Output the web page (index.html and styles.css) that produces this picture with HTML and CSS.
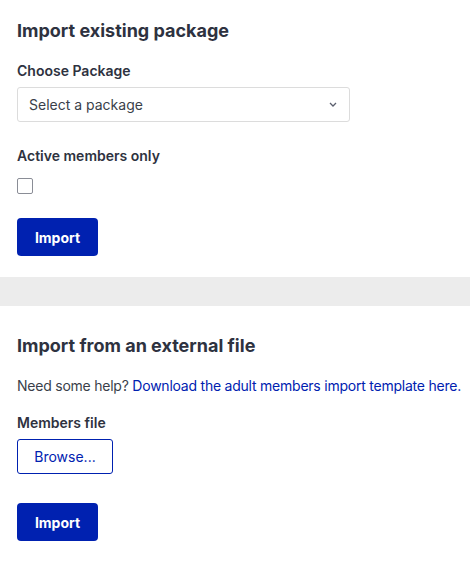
FILE: index.html
```html
<!DOCTYPE html>
<html>
<head>
<meta charset="utf-8">
<link rel="stylesheet" href="styles.css">
</head>
<body>
<section class="panel">
  <h2 class="title">Import existing package</h2>
  <div class="field">
    <label class="label">Choose Package</label>
    <div class="select">
      <span>Select a package</span>
      <svg class="chev" width="8" height="5" viewBox="0 0 8 5"><path d="M1 1l3 3 3-3" fill="none" stroke="#5a5f6e" stroke-width="1.3"/></svg>
    </div>
  </div>
  <div class="field">
    <label class="label label-check">Active members only</label>
    <div class="checkbox"></div>
  </div>
  <button class="btn-primary">Import</button>
</section>
<div class="band"></div>
<section class="panel second">
  <h2 class="title">Import from an external file</h2>
  <p class="help">Need some help? <a href="#">Download the adult members import template here.</a></p>
  <div class="field field-file">
    <label class="label">Members file</label>
    <button class="btn-outline">Browse...</button>
  </div>
  <button class="btn-primary">Import</button>
</section>
</body>
</html>
```
FILE: styles.css
```css
* { box-sizing: border-box; }
body {
  margin: 0;
  font-family: Inter, "Liberation Sans", sans-serif;
  color: #2e3240;
  background: #fff;
}
.panel {
  padding: 19px 17px 21px;
}
.title {
  margin: 0 0 18px;
  font-size: 18px;
  line-height: 24px;
  font-weight: 700;
  color: #2e3240;
}
.field {
  margin-bottom: 24px;
}
.label {
  display: block;
  font-size: 14px;
  font-weight: 600;
  line-height: 20px;
  margin-bottom: 6px;
  color: #2e3240;
}
.label-check {
  margin-bottom: 12px;
}
.select {
  width: 333px;
  height: 35px;
  border: 1px solid #dcdcdc;
  border-radius: 3px;
  display: flex;
  align-items: center;
  justify-content: space-between;
  padding: 0 12px 0 11px;
  font-size: 14px;
  color: #3a3f4a;
}
.chev { display: block; }
.checkbox {
  width: 16px;
  height: 16px;
  border: 1px solid #8a8d96;
  border-radius: 2px;
}
.btn-primary {
  display: block;
  width: 81px;
  height: 38px;
  background: #0021b0;
  color: #fff;
  border: none;
  border-radius: 4px;
  font-family: inherit;
  font-size: 14px;
  font-weight: 700;
}
.band {
  height: 29px;
  background: #ececec;
}
.second {
  padding-top: 28px;
}
.help {
  margin: 0 0 17px;
  font-size: 14px;
  line-height: 20px;
  color: #3a3f4a;
  white-space: nowrap;
  letter-spacing: -0.23px;
}
.help a {
  color: #0021b0;
  text-decoration: none;
}
.field-file {
  margin-bottom: 29px;
}
.btn-outline {
  display: block;
  width: 96px;
  height: 35px;
  background: #fff;
  color: #0021b0;
  border: 1px solid #0021b0;
  border-radius: 3px;
  font-family: inherit;
  font-size: 14px;
}
```
